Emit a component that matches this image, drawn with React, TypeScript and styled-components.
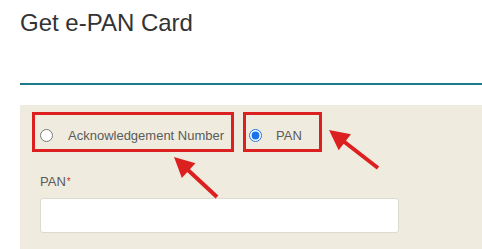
import styled, { createGlobalStyle } from "styled-components";

const GlobalStyle = createGlobalStyle`
  html, body {
    margin: 0;
    padding: 0;
    background: #ffffff;
    font-family: "Liberation Sans", Arial, sans-serif;
  }
`;

type ArrowProps = { from: [number, number]; to: [number, number] };

// red annotation arrow: shaft + triangular head, pointing at "to"
const Arrow = ({ from, to }: ArrowProps) => {
  const dx = to[0] - from[0];
  const dy = to[1] - from[1];
  const len = Math.sqrt(dx * dx + dy * dy);
  const ux = dx / len;
  const uy = dy / len;
  const headLen = 20;
  const half = 10;
  const bx = to[0] - ux * headLen;
  const by = to[1] - uy * headLen;
  const px = -uy * half;
  const py = ux * half;
  return (
    <g>
      <line
        x1={from[0]}
        y1={from[1]}
        x2={bx + ux * 2}
        y2={by + uy * 2}
        stroke="#dc2020"
        strokeWidth={4}
      />
      <polygon
        points={`${to[0]},${to[1]} ${bx + px},${by + py} ${bx - px},${by - py}`}
        fill="#dc2020"
      />
    </g>
  );
};

export default function App() {
  return (
    <Page>
      <GlobalStyle />
      <Header>
        <Title>Get e-PAN Card</Title>
      </Header>
      <Panel>
        <RadioRow>
          <Option $width={202} $padLeft={5} $gap={15}>
            <input type="radio" name="mode" />
            <span>Acknowledgement Number</span>
          </Option>
          <Option $width={79} $padLeft={3} $gap={14}>
            <input type="radio" name="mode" defaultChecked />
            <span>PAN</span>
          </Option>
        </RadioRow>
        <Field>
          <Label>
            PAN<Star>*</Star>
          </Label>
          <TextInput type="text" />
        </Field>
      </Panel>
      <Overlay width="482" height="249" viewBox="0 0 482 249">
        <Arrow from={[217, 197]} to={[174, 157]} />
        <Arrow from={[378, 168]} to={[329, 130]} />
      </Overlay>
    </Page>
  );
}

const Page = styled.div`
  position: relative;
  width: 482px;
  height: 249px;
  overflow: hidden;
  padding-left: 20px;
  box-sizing: border-box;
`;

const Header = styled.div`
  padding: 9px 0 46px;
  border-bottom: 2px solid #1d7a89;
  margin-right: -20px;
`;

const Title = styled.h1`
  margin: 0;
  font-size: 24px;
  line-height: 28px;
  font-weight: normal;
  color: #333333;
`;

const Panel = styled.div`
  margin-top: 20px;
  background: #efecdf;
  padding: 7px 0 30px 12px;
  margin-right: -20px;
  height: 200px;
`;

const RadioRow = styled.div`
  display: flex;
  gap: 9px;
`;

const Option = styled.label<{ $width: number; $padLeft: number; $gap: number }>`
  display: flex;
  align-items: center;
  box-sizing: border-box;
  width: ${(p) => p.$width}px;
  height: 40px;
  padding: 6px 0 0 ${(p) => p.$padLeft}px;
  border: 3px solid #dc2020;
  gap: ${(p) => p.$gap}px;
  font-size: 13px;
  color: #5a5a5a;
  white-space: nowrap;

  input {
    margin: 0;
    width: 13px;
    height: 13px;
    accent-color: #1a73e8;
  }
`;

const Field = styled.div`
  padding-left: 8px;
  margin-top: 22px;
`;

const Label = styled.div`
  font-size: 13px;
  line-height: 15px;
  color: #5a5a5a;
  margin-bottom: 9px;
`;

const Star = styled.span`
  color: #d0331f;
  font-size: 10px;
  vertical-align: top;
  margin-left: 1px;
`;

const TextInput = styled.input`
  display: block;
  box-sizing: border-box;
  width: 359px;
  height: 35px;
  border: 1px solid #dddad0;
  border-radius: 3px;
  background: #ffffff;
  outline: none;
`;

const Overlay = styled.svg`
  position: absolute;
  left: 0;
  top: 0;
  pointer-events: none;
`;
